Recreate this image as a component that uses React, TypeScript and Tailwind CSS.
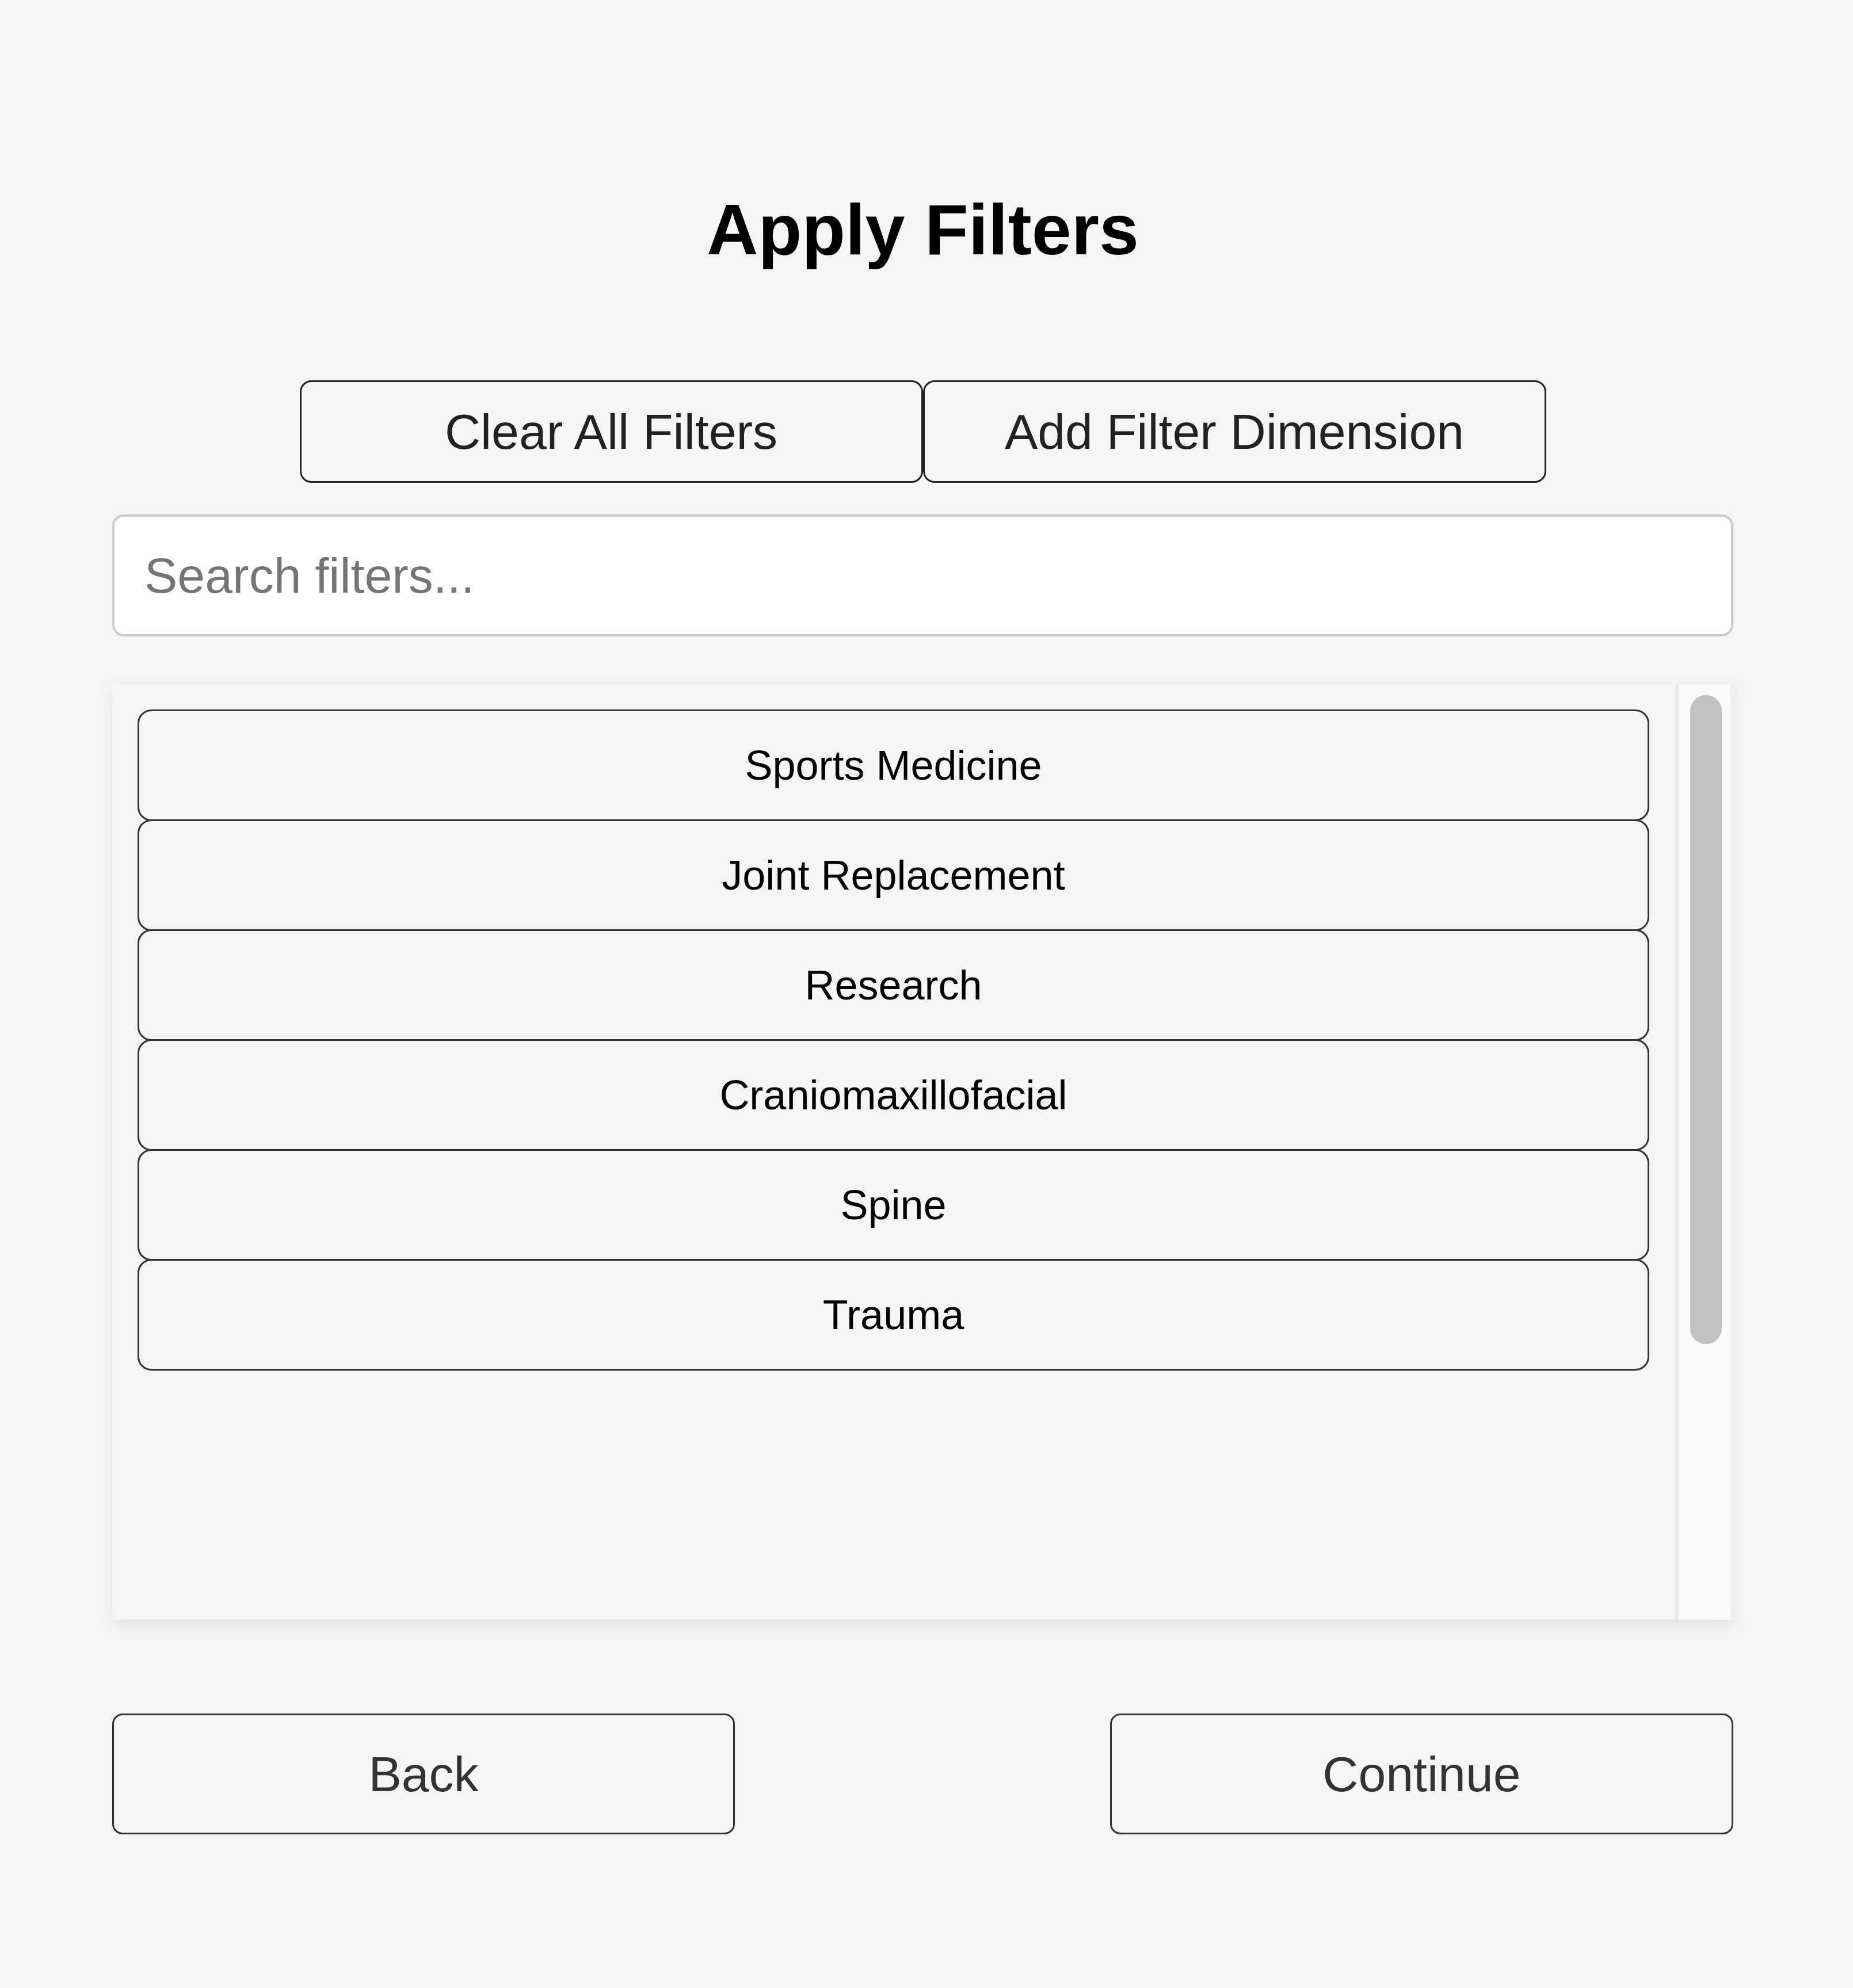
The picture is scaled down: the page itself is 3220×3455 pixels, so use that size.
import React from 'react';

const filters = ['Sports Medicine', 'Joint Replacement', 'Research', 'Craniomaxillofacial', 'Spine', 'Trauma'];

export default function App() {
  return (
    <div className="min-h-[3455px] bg-[#f5f5f5] pl-[195px] pr-[208px] pt-[337px] font-['Liberation_Sans',Arial,sans-serif]">
      <h1 className="text-center text-[124px] font-bold leading-none text-black">Apply Filters</h1>

      {/* Top actions */}
      <div className="mt-[200px] flex justify-center">
        <button className="flex h-[178px] w-[1083px] items-center justify-center rounded-[20px] border-[3px] border-[#222] text-[86px] text-[#222]">
          Clear All Filters
        </button>
        <button className="flex h-[178px] w-[1083px] items-center justify-center rounded-[20px] border-[3px] border-[#222] text-[86px] text-[#222]">
          Add Filter Dimension
        </button>
      </div>

      <input
        type="text"
        placeholder="Search filters..."
        className="mt-[55px] block h-[212px] w-full rounded-[20px] border-4 border-[#cccccc] bg-white pl-[52px] text-[86px] text-[#222] outline-none placeholder:text-[#757575]"
      />

      {/* Filter list */}
      <div className="mt-[83px] flex h-[1626px] bg-[#f5f5f5] shadow-[0_8px_22px_rgba(0,0,0,0.09)]">
        <div className="flex-1 px-[44px] pt-[44px]">
          {filters.map((f, i) => (
            <button
              key={f}
              className={`flex h-[194px] w-full items-center justify-center rounded-[24px] border-[3px] border-[#333] bg-[#f5f5f5] text-[72px] text-black ${i > 0 ? '-mt-[3px]' : ''}`}
            >
              {f}
            </button>
          ))}
        </div>
        <div className="w-[102px] border-l-[7px] border-r-[6px] border-l-[#e8e8e8] border-r-[#f0f0f0] bg-[#fafafa]">
          <div className="ml-[20px] mt-[19px] h-[1128px] w-[55px] rounded-full bg-[#c1c1c1]" />
        </div>
      </div>

      {/* Navigation */}
      <div className="mt-[163px] flex justify-between">
        <button className="flex h-[210px] w-[1082px] items-center justify-center rounded-[18px] border-[3px] border-[#333] text-[86px] text-[#333]">
          Back
        </button>
        <button className="flex h-[210px] w-[1083px] items-center justify-center rounded-[18px] border-[3px] border-[#333] text-[86px] text-[#333]">
          Continue
        </button>
      </div>
    </div>
  );
}
